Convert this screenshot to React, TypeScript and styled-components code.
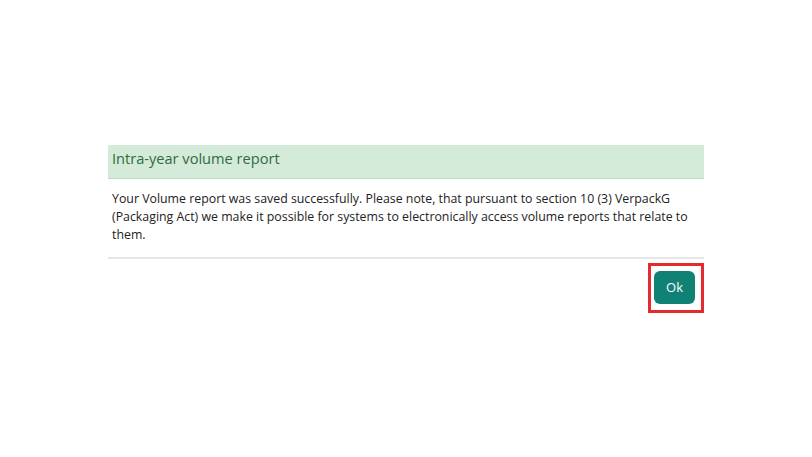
import React from "react";
import styled, { createGlobalStyle } from "styled-components";

const GlobalStyle = createGlobalStyle`
  html, body {
    margin: 0;
    padding: 0;
    background: #ffffff;
    font-family: "Open Sans", "Liberation Sans", sans-serif;
  }
`;

const Page = styled.div`
  width: 100vw;
  height: 457px;
  display: flex;
  align-items: center;
  justify-content: center;
`;

const Dialog = styled.div`
  width: 596px;
  display: flex;
  flex-direction: column;
`;

const Header = styled.div`
  height: 34px;
  box-sizing: border-box;
  display: flex;
  align-items: flex-start;
  padding: 3px 4px 0;
  background: #d4ebd9;
  border-bottom: 1px solid #bcd9c3;
`;

const Title = styled.h2`
  margin: 0;
  font-size: 14.6px;
  line-height: 20px;
  font-weight: 400;
  color: #2e6b40;
`;

const Body = styled.div`
  padding: 11px 4px 13px;
  border-bottom: 2px solid #e6e6e6;
`;

const Paragraph = styled.p`
  margin: 0;
  font-size: 12.35px;
  line-height: 18px;
  color: #222222;
`;

const Footer = styled.div`
  display: flex;
  justify-content: flex-end;
  padding-top: 4px;
`;

const Highlight = styled.div`
  border: 3px solid #e62b2f;
  padding: 5px 6px 6px 3px;
`;

const OkButton = styled.button`
  width: 41px;
  height: 33px;
  border: none;
  border-radius: 6px;
  background: #0f8275;
  color: #ffffff;
  font-family: "Open Sans", "Liberation Sans", sans-serif;
  font-size: 13px;
  cursor: pointer;
`;

export default function App() {
  return (
    <>
      <GlobalStyle />
      <Page>
        <Dialog>
          <Header>
            <Title>Intra-year volume report</Title>
          </Header>
          <Body>
            <Paragraph>
              Your Volume report was saved successfully. Please note, that pursuant to section 10 (3) VerpackG
              (Packaging Act) we make it possible for systems to electronically access volume reports that relate to
              them.
            </Paragraph>
          </Body>
          <Footer>
            <Highlight>
              <OkButton>Ok</OkButton>
            </Highlight>
          </Footer>
        </Dialog>
      </Page>
    </>
  );
}
